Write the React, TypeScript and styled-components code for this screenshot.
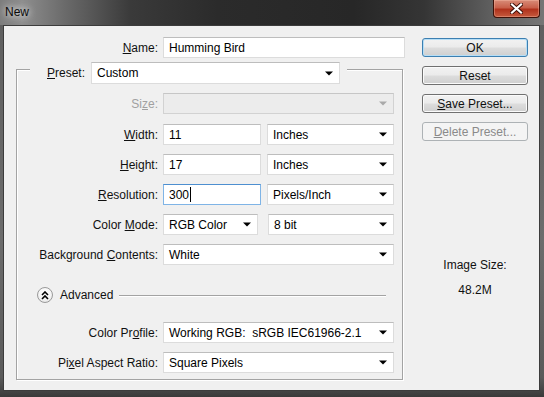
import styled, { createGlobalStyle } from 'styled-components';

const GlobalStyle = createGlobalStyle`
  html, body {
    margin: 0;
    padding: 0;
    background: #4a4a4a;
  }
  body {
    font-family: "Liberation Sans", Arial, sans-serif;
    font-size: 12px;
    color: #000;
  }
`;

function Arrow({ disabled }: { disabled?: boolean }) {
  return (
    <ArrowIcon width="8" height="5" viewBox="0 0 8 5">
      <path d="M0 0.5 L8 0.5 L4 4.5 Z" fill={disabled ? '#a9a9a9' : '#000'} />
    </ArrowIcon>
  );
}

function Dropdown({
  value,
  width,
  height = 21,
  disabled,
}: {
  value?: string;
  width?: number;
  height?: number;
  disabled?: boolean;
}) {
  return (
    <SelectBox $width={width} $height={height} $disabled={disabled}>
      <FieldText>{value}</FieldText>
      <Arrow disabled={disabled} />
    </SelectBox>
  );
}

export default function App() {
  return (
    <>
      <GlobalStyle />
      <Window>
        <TitleBar>
          <Title>New</Title>
          <CloseButton>
            <svg width="13" height="11" viewBox="0 0 13 11">
              <path
                d="M2 1.5 L11 9.5 M11 1.5 L2 9.5"
                stroke="#3a0c05"
                strokeWidth="4"
                strokeLinecap="square"
              />
              <path
                d="M2 1.5 L11 9.5 M11 1.5 L2 9.5"
                stroke="#fff"
                strokeWidth="2.2"
                strokeLinecap="square"
              />
            </svg>
          </CloseButton>
        </TitleBar>

        <Client>
          <LeftColumn>
            <NameRow>
              <Label $width={154}>
                <u>N</u>ame:
              </Label>
              <TextBox $width={242}>Humming Bird</TextBox>
            </NameRow>

            <Group>
              <PresetRow>
                <Label>
                  <u>P</u>reset:
                </Label>
                <Dropdown value="Custom" width={249} height={22} />
              </PresetRow>

              <Rows>
                <FieldRow $extra={1}>
                  <Label $disabled>
                    Si<u>z</u>e:
                  </Label>
                  <Dropdown disabled />
                </FieldRow>
                <FieldRow>
                  <Label>
                    <u>W</u>idth:
                  </Label>
                  <Pair $gap={6}>
                    <TextBox $width={98}>11</TextBox>
                    <Dropdown value="Inches" />
                  </Pair>
                </FieldRow>
                <FieldRow>
                  <Label>
                    <u>H</u>eight:
                  </Label>
                  <Pair $gap={6}>
                    <TextBox $width={98}>17</TextBox>
                    <Dropdown value="Inches" />
                  </Pair>
                </FieldRow>
                <FieldRow>
                  <Label>
                    <u>R</u>esolution:
                  </Label>
                  <Pair $gap={6}>
                    <TextBox $width={98} $focused>
                      300
                      <Caret />
                    </TextBox>
                    <Dropdown value="Pixels/Inch" />
                  </Pair>
                </FieldRow>
                <FieldRow>
                  <Label>
                    Color <u>M</u>ode:
                  </Label>
                  <Pair $gap={10}>
                    <Dropdown value="RGB Color" width={95} />
                    <Dropdown value="8 bit" />
                  </Pair>
                </FieldRow>
                <FieldRow>
                  <Label>
                    Background <u>C</u>ontents:
                  </Label>
                  <Dropdown value="White" />
                </FieldRow>
              </Rows>

              <AdvancedRow>
                <RoundToggle>
                  <svg width="8" height="9" viewBox="0 0 8 9">
                    <path
                      d="M1 4 L4 1 L7 4 M1 8 L4 5 L7 8"
                      stroke="#000"
                      strokeWidth="1.6"
                      fill="none"
                    />
                  </svg>
                </RoundToggle>
                <AdvancedText>Advanced</AdvancedText>
                <Rule />
              </AdvancedRow>

              <Rows $top={19}>
                <FieldRow>
                  <Label>
                    Color Pr<u>o</u>file:
                  </Label>
                  <Dropdown value="Working RGB:  sRGB IEC61966-2.1" />
                </FieldRow>
                <FieldRow>
                  <Label>
                    Pi<u>x</u>el Aspect Ratio:
                  </Label>
                  <Dropdown value="Square Pixels" />
                </FieldRow>
              </Rows>
            </Group>
          </LeftColumn>

          <RightColumn>
            <Buttons>
              <Button $default>OK</Button>
              <Button>Reset</Button>
              <Button>
                <u>S</u>ave Preset...
              </Button>
              <Button $disabled>
                <u>D</u>elete Preset...
              </Button>
            </Buttons>
            <SizeInfo>
              <span>Image Size:</span>
              <span>48.2M</span>
            </SizeInfo>
          </RightColumn>
        </Client>
      </Window>
    </>
  );
}

const Window = styled.div`
  width: 544px;
  height: 397px;
  display: flex;
  flex-direction: column;
  background: linear-gradient(180deg, #5e5e5e 0%, #6c6c6c 60%, #5a5a5a 95%, #3a3a3a 100%);
  overflow: hidden;
`;

const TitleBar = styled.div`
  height: 25px;
  flex-shrink: 0;
  display: flex;
  align-items: flex-start;
  justify-content: space-between;
  padding: 0 4px 0 5px;
  background: linear-gradient(
    90deg,
    #7c7c7c 0%,
    #8e8e8e 4%,
    #6a6a6a 12%,
    #3a3a3a 24%,
    #2b2b2b 40%,
    #272727 65%,
    #353535 78%,
    #5e5e5e 90%,
    #767676 100%
  );
`;

const Title = styled.div`
  margin-top: 5px;
  font-family: "Liberation Sans", Arial, sans-serif;
  font-size: 12px;
  line-height: 14px;
  color: #0a0a0a;
  text-shadow: 0 0 6px rgba(255, 255, 255, 0.9), 0 0 12px rgba(255, 255, 255, 0.6);
`;

const CloseButton = styled.div`
  width: 47px;
  height: 18px;
  box-sizing: border-box;
  display: flex;
  align-items: center;
  justify-content: center;
  border: 1px solid #3d1108;
  border-top: none;
  border-radius: 0 0 4px 4px;
  background: linear-gradient(180deg, #d88c78 0%, #c8604a 45%, #b0321c 55%, #c65a3e 100%);
  box-shadow: inset 0 0 0 1px rgba(255, 200, 180, 0.35);
`;

const Client = styled.div`
  flex: 1;
  margin: 0 4px 6px 3px;
  border: 1px solid #3c3c3c;
  background: #f0f0f0;
  display: flex;
`;

const LeftColumn = styled.div`
  width: 401px;
  display: flex;
  flex-direction: column;
`;

const NameRow = styled.div`
  margin-top: 11px;
  display: flex;
  align-items: center;
  gap: 5px;
`;

const Label = styled.div<{ $width?: number; $disabled?: boolean }>`
  ${(p) => (p.$width ? `width: ${p.$width}px;` : '')}
  text-align: right;
  white-space: nowrap;
  line-height: 14px;
  color: ${(p) => (p.$disabled ? '#a0a0a0' : '#101010')};
`;

const TextBox = styled.div<{ $width?: number; $focused?: boolean }>`
  ${(p) => (p.$width ? `width: ${p.$width}px;` : 'flex: 1;')}
  height: 21px;
  box-sizing: border-box;
  display: flex;
  align-items: center;
  padding: 0 5px;
  background: #fff;
  border: 1px solid ${(p) => (p.$focused ? '#7fb4e6' : '#dcdcdc')};
  border-top-color: ${(p) => (p.$focused ? '#4d8fd0' : '#bdbdbd')};
  white-space: nowrap;
  line-height: 14px;
`;

const Caret = styled.span`
  display: inline-block;
  width: 1px;
  height: 15px;
  background: #000;
  margin-left: 1px;
`;

const SelectBox = styled.div<{ $width?: number; $height: number; $disabled?: boolean }>`
  ${(p) => (p.$width ? `width: ${p.$width}px; flex-shrink: 0;` : 'flex: 1;')}
  height: ${(p) => p.$height}px;
  box-sizing: border-box;
  display: flex;
  align-items: center;
  padding: 0 6px 0 5px;
  background: ${(p) => (p.$disabled ? '#ececec' : '#fff')};
  border: 1px solid ${(p) => (p.$disabled ? '#d2d2d2' : '#dcdcdc')};
  border-top-color: ${(p) => (p.$disabled ? '#c6c6c6' : '#bdbdbd')};
`;

const FieldText = styled.span`
  flex: 1;
  white-space: pre;
  line-height: 14px;
`;

const ArrowIcon = styled.svg`
  flex-shrink: 0;
`;

const Group = styled.div`
  margin: 11px 0 0 12px;
  width: 387px;
  height: 311px;
  box-sizing: border-box;
  border: 1px solid #a3a3a3;
  box-shadow: 1px 1px 0 #fff, inset 1px 1px 0 #fff;
  display: flex;
  flex-direction: column;
`;

const PresetRow = styled.div`
  margin: -8px 0 0 13px;
  align-self: flex-start;
  display: flex;
  align-items: center;
  gap: 6px;
  padding: 0 7px 0 17px;
  background: #f0f0f0;
`;

const Rows = styled.div<{ $top?: number }>`
  margin-top: ${(p) => p.$top ?? 9}px;
  display: flex;
  flex-direction: column;
  gap: 9px;
`;

const FieldRow = styled.div<{ $extra?: number }>`
  display: grid;
  grid-template-columns: 141px 231px;
  column-gap: 5px;
  align-items: center;
  margin-bottom: ${(p) => p.$extra ?? 0}px;
`;

const Pair = styled.div<{ $gap: number }>`
  display: flex;
  gap: ${(p) => p.$gap}px;
`;

const AdvancedRow = styled.div`
  margin-top: 22px;
  height: 16px;
  display: flex;
  align-items: center;
  padding: 0 16px 0 20px;
`;

const RoundToggle = styled.div`
  width: 16px;
  height: 16px;
  box-sizing: border-box;
  border-radius: 50%;
  border: 1px solid #9a9a9a;
  background: radial-gradient(circle at 50% 35%, #ffffff 0%, #f4f4f4 55%, #dcdcdc 100%);
  display: flex;
  align-items: center;
  justify-content: center;
`;

const AdvancedText = styled.span`
  margin: 0 6px 0 7px;
  font-size: 12px;
  line-height: 14px;
  color: #101010;
`;

const Rule = styled.div`
  flex: 1;
  height: 1px;
  background: #a3a3a3;
  box-shadow: 0 1px 0 #fff;
`;

const RightColumn = styled.div`
  margin-left: 17px;
  width: 106px;
  display: flex;
  flex-direction: column;
`;

const Buttons = styled.div`
  margin-top: 12px;
  display: flex;
  flex-direction: column;
  gap: 9px;
`;

const Button = styled.div<{ $default?: boolean; $disabled?: boolean }>`
  height: 19px;
  box-sizing: border-box;
  display: flex;
  align-items: center;
  justify-content: center;
  border-radius: 3px;
  line-height: 14px;
  border: 1px solid ${(p) => (p.$default ? '#3c7fb1' : p.$disabled ? '#adb2b5' : '#707070')};
  color: ${(p) => (p.$disabled ? '#8a8a8a' : '#101010')};
  background: ${(p) =>
    p.$disabled
      ? '#f4f4f4'
      : 'linear-gradient(180deg, #f2f2f2 0%, #ebebeb 48%, #dddddd 52%, #cfcfcf 100%)'};
  box-shadow: inset 0 0 0 1px ${(p) => (p.$default ? '#b6def6' : p.$disabled ? '#f4f4f4' : '#fbfbfb')};
`;

const SizeInfo = styled.div`
  margin-top: 117px;
  display: flex;
  flex-direction: column;
  align-items: center;
  gap: 11px;
  line-height: 14px;
  color: #111;
`;
